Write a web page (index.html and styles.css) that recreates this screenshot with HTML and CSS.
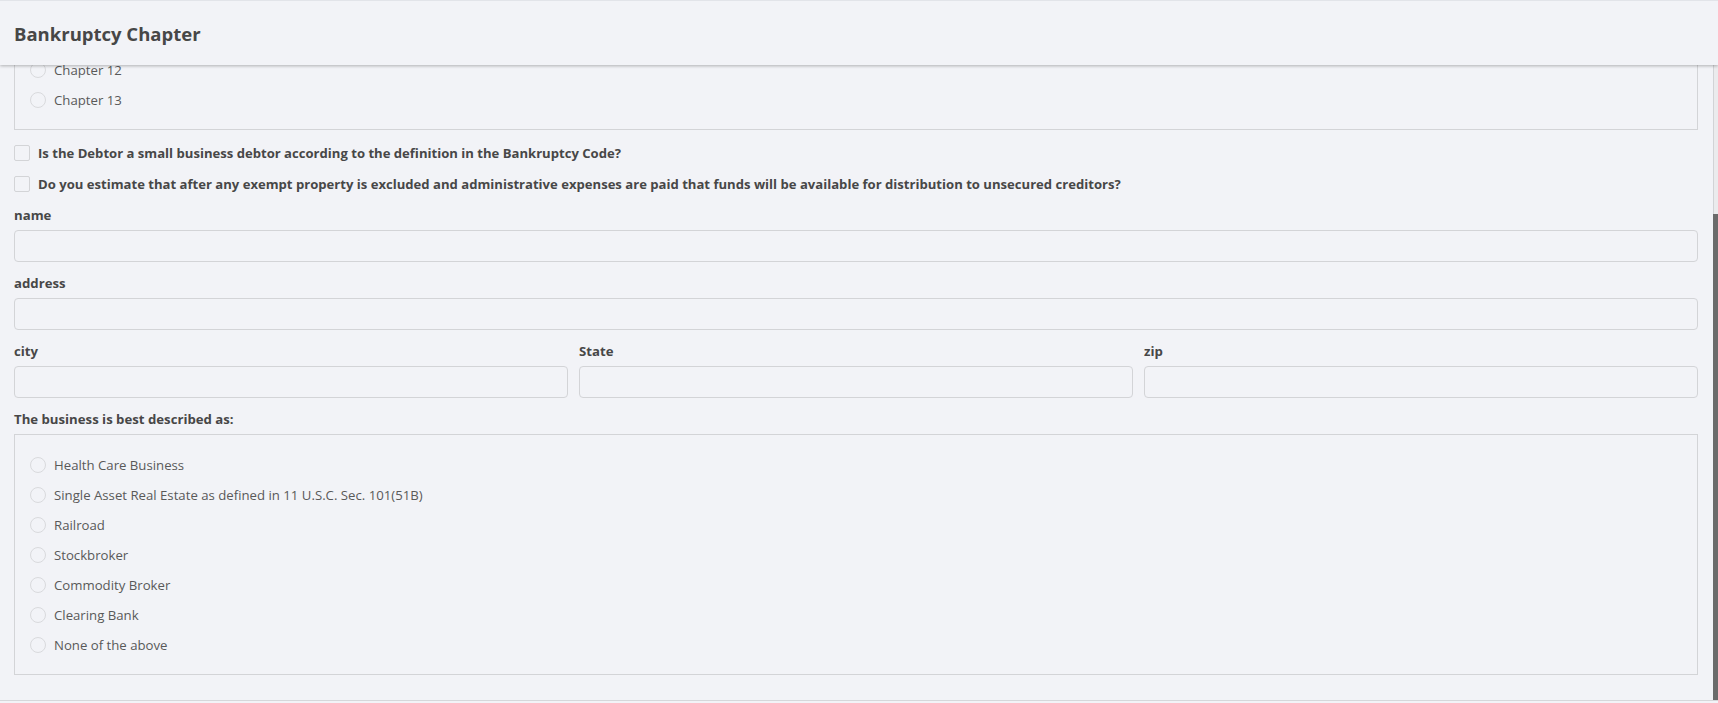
FILE: index.html
```html
<!DOCTYPE html>
<html lang="en">
<head>
<meta charset="utf-8">
<title>Bankruptcy Chapter</title>
<link rel="stylesheet" href="styles.css">
</head>
<body>
<div class="app">
  <header class="topbar">
    <h1 class="title">Bankruptcy Chapter</h1>
  </header>
  <div class="body">
    <main class="scroller">
      <form class="form">
        <fieldset class="group">
          <label class="opt"><input class="radio" type="radio" name="chapter">Chapter 12</label>
          <label class="opt"><input class="radio" type="radio" name="chapter">Chapter 13</label>
        </fieldset>

        <div class="checks">
          <label class="check"><input class="box" type="checkbox">Is the Debtor a small business debtor according to the definition in the Bankruptcy Code?</label>
          <label class="check"><input class="box" type="checkbox">Do you estimate that after any exempt property is excluded and administrative expenses are paid that funds will be available for distribution to unsecured creditors?</label>
        </div>

        <div class="field">
          <label class="label" for="f-name">name</label>
          <input class="control" id="f-name" type="text">
        </div>
        <div class="field">
          <label class="label" for="f-address">address</label>
          <input class="control" id="f-address" type="text">
        </div>
        <div class="field row3">
          <div class="cell">
            <label class="label" for="f-city">city</label>
            <input class="control" id="f-city" type="text">
          </div>
          <div class="cell">
            <label class="label" for="f-state">State</label>
            <input class="control" id="f-state" type="text">
          </div>
          <div class="cell">
            <label class="label" for="f-zip">zip</label>
            <input class="control" id="f-zip" type="text">
          </div>
        </div>

        <div class="label">The business is best described as:</div>
        <fieldset class="group">
          <label class="opt"><input class="radio" type="radio" name="biz">Health Care Business</label>
          <label class="opt"><input class="radio" type="radio" name="biz">Single Asset Real Estate as defined in 11 U.S.C. Sec. 101(51B)</label>
          <label class="opt"><input class="radio" type="radio" name="biz">Railroad</label>
          <label class="opt"><input class="radio" type="radio" name="biz">Stockbroker</label>
          <label class="opt"><input class="radio" type="radio" name="biz">Commodity Broker</label>
          <label class="opt"><input class="radio" type="radio" name="biz">Clearing Bank</label>
          <label class="opt"><input class="radio" type="radio" name="biz">None of the above</label>
        </fieldset>
      </form>
    </main>
    <div class="rail" aria-hidden="true">
      <div class="rail-track"></div>
      <div class="rail-thumb"></div>
    </div>
  </div>
  <footer class="foot"></footer>
</div>
</body>
</html>
```

FILE: styles.css
```css
* { box-sizing: border-box; }

html, body {
  margin: 0;
  padding: 0;
  height: 100%;
  background: #f2f3f7;
  font-family: "Open Sans", "Noto Sans", sans-serif;
  color: #4a4a4a;
}

.app {
  height: 100vh;
  display: flex;
  flex-direction: column;
  overflow: hidden;
}

.topbar {
  flex: 0 0 65px;
  display: flex;
  align-items: center;
  padding: 0 14px;
  background: #f2f3f7;
  border-top: 1px solid #e2e4e9;
  box-shadow: 0 1px 3px rgba(0, 0, 0, 0.28);
  position: relative;
  z-index: 2;
}

.title {
  margin: 0;
  font-size: 18.5px;
  font-weight: 700;
  color: #474747;
}

.body {
  flex: 1 1 auto;
  min-height: 0;
  display: flex;
}

.scroller {
  flex: 1 1 auto;
  min-width: 0;
  overflow: hidden;
  display: flex;
  flex-direction: column-reverse;
}

.rail {
  flex: 0 0 5px;
  display: flex;
  flex-direction: column;
}

.rail-track {
  flex: 0 0 149px;
  background: #ebebed;
  border-left: 1px solid #d2d3d6;
}

.rail-thumb {
  flex: 1 1 auto;
  background: #6b6b6b;
}

.form {
  flex: 0 0 auto;
  padding: 0 15px 25px 14px;
  font-size: 13px;
}

.label {
  display: block;
  font-size: 13.2px;
  font-weight: 700;
  line-height: 20px;
  margin-bottom: 5px;
  color: #474747;
}

.group {
  margin: 0;
  padding: 15px 15px 14px;
  border: 1px solid #d3d4d7;
  min-width: 0;
}

.opt {
  display: flex;
  align-items: center;
  height: 30px;
  font-size: 13.2px;
  color: #595959;
}

.radio {
  appearance: none;
  -webkit-appearance: none;
  width: 16px;
  height: 16px;
  margin: 0 8px 0 0;
  border: 1px solid #d9dadd;
  border-radius: 50%;
  background: #f2f3f7;
  flex: 0 0 auto;
}

.checks {
  margin-top: 7px;
}

.check {
  display: flex;
  align-items: center;
  height: 31px;
  font-size: 13.1px;
  font-weight: 700;
  color: #474747;
}

.box {
  appearance: none;
  -webkit-appearance: none;
  width: 16px;
  height: 16px;
  margin: 0 8px 0 0;
  border: 1px solid #d3d4d7;
  border-radius: 2px;
  background: #f2f3f7;
  flex: 0 0 auto;
}

.field {
  margin-top: 6px;
  margin-bottom: 11px;
}

.field + .field { margin-top: 0; }

.control {
  display: block;
  width: 100%;
  height: 32px;
  margin: 0;
  padding: 4px 8px;
  border: 1px solid #d3d4d7;
  border-radius: 4px;
  background: #f2f3f7;
  font: inherit;
  color: #4a4a4a;
}

.row3 {
  display: grid;
  grid-template-columns: 1fr 1fr 1fr;
  column-gap: 11px;
}

.foot {
  flex: 0 0 3px;
  border-top: 1px solid #d6d7da;
  background: #f2f3f7;
}
```
